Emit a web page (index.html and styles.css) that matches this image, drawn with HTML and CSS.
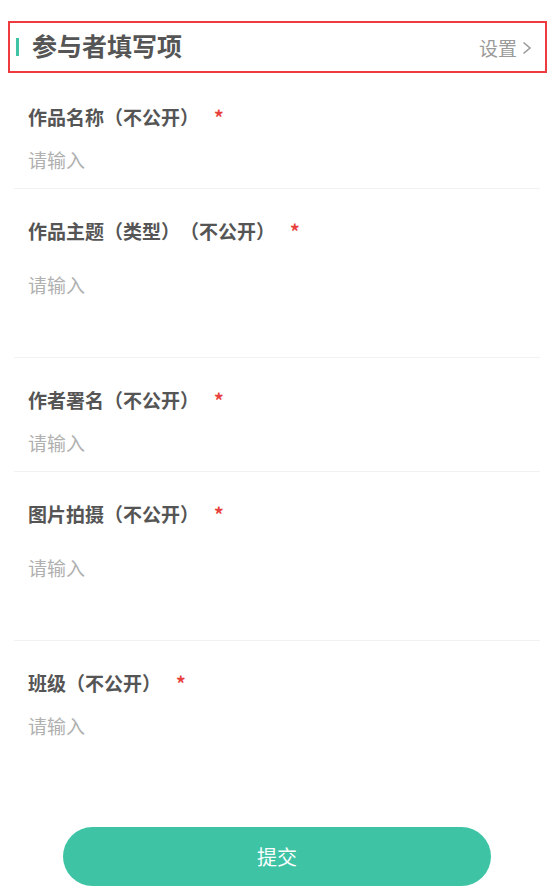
FILE: index.html
```html
<!DOCTYPE html>
<html lang="zh-CN">

<head>
    <meta charset="UTF-8">
    <meta name="viewport" content="width=device-width, initial-scale=1.0">
    <title>参与者填写项</title>
    <link rel="stylesheet" href="styles.css">
</head>

<body>
    <div class="page">
        <div class="section-head">
            <h2 class="section-title">参与者填写项</h2>
            <a class="section-link" href="#">设置
                <svg class="chevron" width="12" height="14" viewBox="0 0 12 14">
                    <path d="M2.5 1.5 L9 7 L2.5 12.5" fill="none" stroke="#9a9a9a" stroke-width="1.6" />
                </svg>
            </a>
        </div>

        <div class="field">
            <div class="field-label">作品名称（不公开）<span class="required">*</span></div>
            <input class="field-input" type="text" placeholder="请输入">
        </div>
        <div class="field">
            <div class="field-label">作品主题（类型）（不公开）<span class="required">*</span></div>
            <textarea class="field-area" placeholder="请输入"></textarea>
        </div>
        <div class="field">
            <div class="field-label">作者署名（不公开）<span class="required">*</span></div>
            <input class="field-input" type="text" placeholder="请输入">
        </div>
        <div class="field">
            <div class="field-label">图片拍摄（不公开）<span class="required">*</span></div>
            <textarea class="field-area" placeholder="请输入"></textarea>
        </div>
        <div class="field last">
            <div class="field-label">班级（不公开）<span class="required">*</span></div>
            <input class="field-input" type="text" placeholder="请输入">
        </div>

        <button class="submit-btn" type="button">提交</button>
    </div>
</body>

</html>
```

FILE: styles.css
```css
body {
    margin: 0;
    background: #ffffff;
    font-family: "Noto Sans CJK SC", "Noto Sans", sans-serif;
    color: #555555;
    text-spacing-trim: space-all;
}

.page {
    padding-top: 21px;
}

/* red outlined header */
.section-head {
    display: flex;
    align-items: center;
    justify-content: space-between;
    box-sizing: border-box;
    height: 52px;
    margin: 0 7px 2px 8px;
    padding: 0 12px 0 6px;
    border: 2px solid #ee3b40;
}

.section-title {
    position: relative;
    margin: 0 0 4px;
    padding-left: 16px;
    font-size: 25px;
    font-weight: 700;
    line-height: 30px;
    color: #555555;
}

.section-title::before {
    content: '';
    position: absolute;
    left: 0;
    top: 8px;
    width: 3px;
    height: 18px;
    background: #3ec4a5;
}

.section-link {
    display: flex;
    align-items: center;
    gap: 4px;
    font-size: 19px;
    color: #9a9a9a;
    text-decoration: none;
}

.chevron {
    margin-top: 1px;
}

.field {
    margin: 0 14px;
    padding: 28px 14px 14px;
    border-bottom: 1px solid #f2f2f2;
}

.field.last {
    border-bottom: none;
}

.field-label {
    font-size: 19px;
    font-weight: 700;
    line-height: 28px;
    color: #555555;
}

.required {
    margin-left: 15px;
    color: #e8413c;
    font-size: 19px;
}

.field-input,
.field-area {
    display: block;
    width: 100%;
    box-sizing: border-box;
    margin-top: 15px;
    padding: 0;
    border: none;
    outline: none;
    background: transparent;
    font-family: inherit;
    font-size: 19px;
    line-height: 28px;
    color: #333333;
}

.field-input {
    height: 28px;
}

.field-area {
    height: 83px;
    padding-top: 11px;
    resize: none;
}

.field-input::placeholder,
.field-area::placeholder {
    color: #b0b0b0;
}

.submit-btn {
    display: block;
    width: 428px;
    height: 59px;
    margin: 73px auto 0;
    border: none;
    border-radius: 30px;
    background: #3ec4a5;
    color: #ffffff;
    font-family: inherit;
    font-size: 20px;
}
```
